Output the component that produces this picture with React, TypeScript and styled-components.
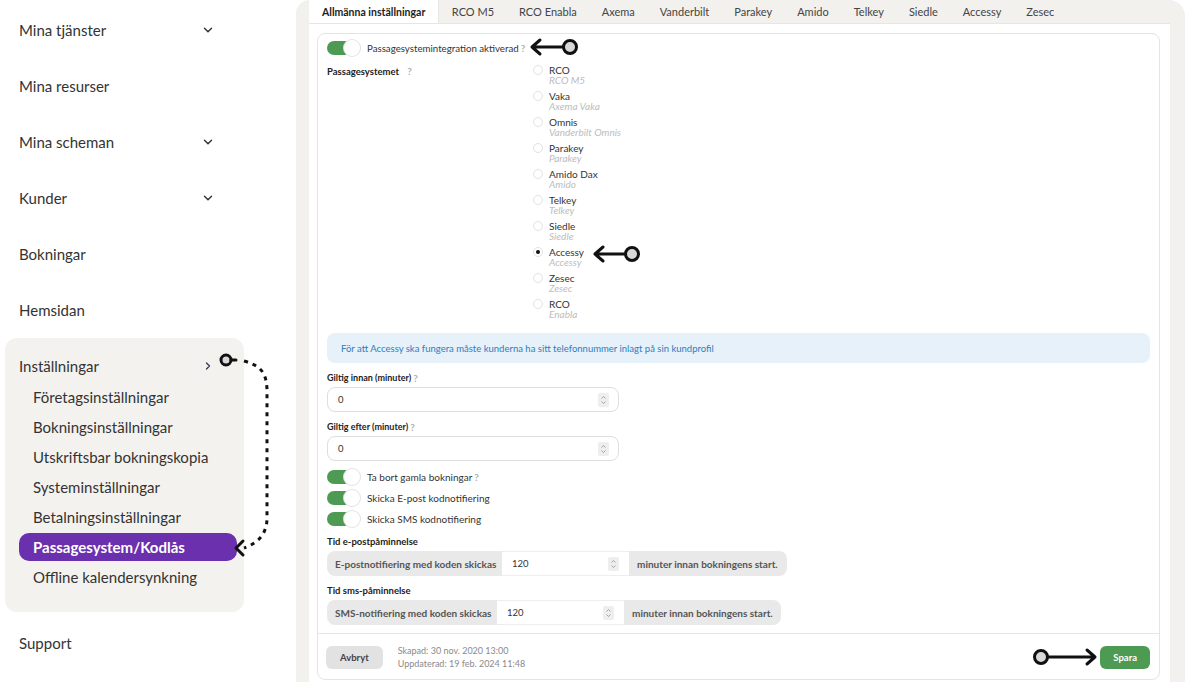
import React from "react";
import styled, { createGlobalStyle } from "styled-components";
import { ChevronDown, ChevronRight } from "lucide-react";

const UBUNTU = `"Lato", "Noto Sans", sans-serif`;
const NARROW = `"Lato", "Liberation Sans", sans-serif`;
const GREEN = "#4d9a52";

const GlobalStyle = createGlobalStyle`
  html, body {
    margin: 0;
    padding: 0;
    background: #ffffff;
    overflow: hidden;
  }
  * {
    box-sizing: border-box;
  }
`;

const Page = styled.div`
  position: relative;
  display: flex;
  width: 1186px;
  height: 682px;
  font-family: ${UBUNTU};
  color: #333;
  overflow: hidden;
`;

/* ---------- sidebar ---------- */

const Sidebar = styled.nav`
  width: 245px;
  flex-shrink: 0;
  padding-top: 2px;
`;

const SideItem = styled.div`
  height: 56px;
  padding: 0 30px 0 19px;
  display: flex;
  align-items: center;
  justify-content: space-between;
  font-size: 15px;
  color: #333;
`;

const SettingsBox = styled.div`
  margin-left: 5px;
  width: 239px;
  background: #f3f2ef;
  border-radius: 12px;
  padding-bottom: 20px;
  margin-bottom: 3px;
`;

const SettingsHead = styled.div`
  display: flex;
  align-items: center;
  justify-content: space-between;
  height: 44px;
  padding: 18px 30px 6px 14px;
  font-size: 15px;
  line-height: 20px;
`;

const SubItem = styled.div<{ $active?: boolean }>`
  height: ${(p) => (p.$active ? "28px" : "30px")};
  margin: ${(p) => (p.$active ? "1px 7px 1px 14px" : "0")};
  padding-left: ${(p) => (p.$active ? "14px" : "28px")};
  display: flex;
  align-items: center;
  font-size: 15px;
  border-radius: 10px;
  background: ${(p) => (p.$active ? "#6a30ad" : "transparent")};
  color: ${(p) => (p.$active ? "#ffffff" : "#333")};
  font-weight: ${(p) => (p.$active ? 700 : 400)};
`;

/* ---------- main panel ---------- */

const Main = styled.main`
  margin-left: 51px;
  width: 889px;
  height: 694px;
  background: #f2f1ee;
  border-radius: 14px 16px 0 14px;
  padding: 0 15px 0 13px;
  display: flex;
  flex-direction: column;
`;

const Tabs = styled.div`
  display: flex;
  height: 23px;
  flex-shrink: 0;
`;

const Tab = styled.div<{ $active?: boolean }>`
  display: flex;
  align-items: center;
  padding: 0 ${(p) => (p.$active ? "13px" : "12.5px")};
  font-size: ${(p) => (p.$active ? "10.5px" : "11px")};
  font-weight: ${(p) => (p.$active ? 700 : 400)};
  color: ${(p) => (p.$active ? "#222" : "#444")};
  background: ${(p) => (p.$active ? "#ffffff" : "transparent")};
  border-right: ${(p) => (p.$active ? "1px solid #e6e6e6" : "none")};
`;

const Content = styled.div`
  flex: 1;
  background: #ffffff;
  border-top: 1px solid #e6e6e6;
  padding: 9px 10px 16px 8px;
  display: flex;
`;

const Card = styled.section`
  flex: 1;
  border: 1px solid #e4e4e4;
  border-radius: 8px;
  display: flex;
  flex-direction: column;
`;

const CardBody = styled.div`
  padding: 7px 9px 8px 9px;
  display: flex;
  flex-direction: column;
`;

const ToggleRow = styled.div<{ $h?: number }>`
  display: flex;
  align-items: center;
  height: ${(p) => p.$h ?? 14}px;
  font-size: 10px;
  color: #333;
`;

const Switch = styled.span`
  position: relative;
  width: 32px;
  height: 14px;
  border-radius: 7px;
  background: ${GREEN};
  margin-right: 8px;
  flex-shrink: 0;

  &::after {
    content: "";
    position: absolute;
    right: -1px;
    top: -1px;
    width: 16px;
    height: 16px;
    border-radius: 50%;
    background: #fff;
    box-shadow: 0 0 0 1px #e2e2e2;
  }
`;

const Help = styled.span<{ $gap?: number }>`
  color: #b0b0b0;
  font-weight: 700;
  font-size: 10px;
  margin-left: ${(p) => p.$gap ?? 2}px;
`;

const SwitchText = styled.span`
  font-size: 9.7px;
`;

const SystemRow = styled.div`
  display: flex;
  margin-top: 10px;
`;

const FieldLabel = styled.div<{ $narrow?: boolean }>`
  font-family: ${(p) => (p.$narrow ? NARROW : UBUNTU)};
  font-size: ${(p) => (p.$narrow ? "9px" : "9.5px")};
  font-weight: 700;
  color: #222;
  line-height: 14px;
`;

const SystemLabel = styled(FieldLabel)`
  width: 206px;
  margin-top: -1px;
`;

const RadioList = styled.div`
  display: flex;
  flex-direction: column;
`;

const RadioItem = styled.div`
  display: grid;
  grid-template-columns: 16px auto;
  padding-bottom: 6px;
  line-height: 10px;
  font-size: 10px;
`;

const Radio = styled.span<{ $checked?: boolean }>`
  width: 10px;
  height: 10px;
  border-radius: 50%;
  border: 1px solid #e2e2e2;
  background: #fff;
  display: flex;
  align-items: center;
  justify-content: center;

  &::after {
    content: "";
    width: 4px;
    height: 4px;
    border-radius: 50%;
    background: ${(p) => (p.$checked ? "#111" : "transparent")};
  }
`;

const RadioName = styled.span`
  color: #333;
`;

const RadioSub = styled.span`
  grid-column: 2;
  color: #bdbdbd;
  font-style: italic;
`;

const InfoBox = styled.div`
  margin-top: 8px;
  height: 30px;
  border-radius: 8px;
  background: #e6f1fa;
  color: #2e7dc0;
  font-family: ${NARROW};
  font-size: 9.5px;
  display: flex;
  align-items: center;
  padding-left: 14px;
`;

const LabelRow = styled.div<{ $mt: number }>`
  display: flex;
  align-items: center;
  margin-top: ${(p) => p.$mt}px;
`;

const NumberInput = styled.div`
  margin-top: 2px;
  width: 292px;
  height: 25px;
  border: 1px solid #dedede;
  border-radius: 8px;
  display: flex;
  align-items: center;
  justify-content: space-between;
  padding: 0 9px 0 10px;
  font-family: ${NARROW};
  font-size: 9.5px;
  color: #333;
`;

const SpinBox = styled.span`
  width: 11px;
  height: 14px;
  background: #eeeeee;
  border-radius: 2px;
  display: flex;
  align-items: center;
  justify-content: center;
`;

const Group = styled.div<{ $w: number }>`
  margin-top: 2px;
  width: ${(p) => p.$w}px;
  height: 25px;
  border-radius: 8px;
  background: #e9e9e9;
  display: flex;
  overflow: hidden;
`;

const Addon = styled.div<{ $w?: number }>`
  display: flex;
  align-items: center;
  flex-shrink: 0;
  width: ${(p) => (p.$w ? `${p.$w}px` : "auto")};
  padding: 0 7px 0 8px;
  font-size: 10px;
  font-weight: 700;
  color: #555;
  white-space: nowrap;
`;

const GroupInput = styled.div`
  width: 127px;
  flex-shrink: 0;
  background: #fff;
  border-top: 1px solid #eeeeee;
  border-bottom: 1px solid #eeeeee;
  display: flex;
  align-items: center;
  justify-content: space-between;
  padding: 0 10px 0 10px;
  font-size: 9.5px;
  color: #333;
`;

const Footer = styled.footer`
  border-top: 1px solid #e6e6e6;
  padding: 10px 9px 9px 8px;
  display: flex;
  align-items: center;
`;

const Button = styled.button<{ $primary?: boolean }>`
  height: 23px;
  padding: 0 ${(p) => (p.$primary ? "13px" : "14px")};
  border: none;
  border-radius: 6px;
  background: ${(p) => (p.$primary ? GREEN : "#e2e2e2")};
  color: ${(p) => (p.$primary ? "#fff" : "#444")};
  font-family: ${NARROW};
  font-size: 9.5px;
  font-weight: 700;
`;

const Stamps = styled.div`
  margin-left: 15px;
  display: flex;
  flex-direction: column;
  font-family: ${NARROW};
  font-size: 9px;
  line-height: 13px;
  color: #8a8a8a;
  flex: 1;
`;

const Overlay = styled.svg`
  position: absolute;
  left: 0;
  top: 0;
  pointer-events: none;
`;

/* ---------- data ---------- */

const tabs = [
  "Allmänna inställningar",
  "RCO M5",
  "RCO Enabla",
  "Axema",
  "Vanderbilt",
  "Parakey",
  "Amido",
  "Telkey",
  "Siedle",
  "Accessy",
  "Zesec",
];

const systems = [
  ["RCO", "RCO M5"],
  ["Vaka", "Axema Vaka"],
  ["Omnis", "Vanderbilt Omnis"],
  ["Parakey", "Parakey"],
  ["Amido Dax", "Amido"],
  ["Telkey", "Telkey"],
  ["Siedle", "Siedle"],
  ["Accessy", "Accessy"],
  ["Zesec", "Zesec"],
  ["RCO", "Enabla"],
];

const settings = [
  "Företagsinställningar",
  "Bokningsinställningar",
  "Utskriftsbar bokningskopia",
  "Systeminställningar",
  "Betalningsinställningar",
  "Passagesystem/Kodlås",
  "Offline kalendersynkning",
];

const Spinner = () => (
  <SpinBox>
    <svg width="7" height="10" viewBox="0 0 7 10" fill="none" stroke="#9a9a9a" strokeWidth="0.9">
      <path d="M1.5 3.5 L3.5 1.5 L5.5 3.5" />
      <path d="M1.5 6.5 L3.5 8.5 L5.5 6.5" />
    </svg>
  </SpinBox>
);

const Annotations = () => (
  <Overlay width="1186" height="682" viewBox="0 0 1186 682">
    <g fill="none" stroke="#111" strokeWidth="3" strokeLinecap="round" strokeLinejoin="round">
      {/* toggle arrow */}
      <path d="M532 47 H563 M540 40 L532 47 L540 54" />
      <circle cx="570" cy="47" r="6.5" fill="#d9d9d9" />
      {/* accessy arrow */}
      <path d="M595 254 H625 M603 247 L595 254 L603 261" />
      <circle cx="632" cy="254" r="6.5" fill="#d9d9d9" />
      {/* save arrow */}
      <path d="M1048 657 H1095 M1087 650 L1095 657 L1087 664" />
      <circle cx="1041" cy="657" r="6.5" fill="#d9d9d9" />
      {/* settings loop */}
      <circle cx="226" cy="360" r="5" fill="#d9d9d9" />
      <path d="M231 360 H236" />
      <path
        d="M244 361 C262 366 267 374 267 392 V518 C267 534 258 543 244 548"
        strokeDasharray="4 5"
        strokeLinecap="butt"
      />
      <path d="M243 541 L236 548 L243 555" />
    </g>
  </Overlay>
);

export default function App() {
  return (
    <>
      <GlobalStyle />
      <Page>
        <Sidebar>
          <SideItem>
            Mina tjänster <ChevronDown size={14} strokeWidth={2.5} />
          </SideItem>
          <SideItem>Mina resurser</SideItem>
          <SideItem>
            Mina scheman <ChevronDown size={14} strokeWidth={2.5} />
          </SideItem>
          <SideItem>
            Kunder <ChevronDown size={14} strokeWidth={2.5} />
          </SideItem>
          <SideItem>Bokningar</SideItem>
          <SideItem>Hemsidan</SideItem>
          <SettingsBox>
            <SettingsHead>
              Inställningar <ChevronRight size={12} strokeWidth={2.5} color="#2b3a55" />
            </SettingsHead>
            {settings.map((s) => (
              <SubItem key={s} $active={s === "Passagesystem/Kodlås"}>
                {s}
              </SubItem>
            ))}
          </SettingsBox>
          <SideItem>Support</SideItem>
        </Sidebar>

        <Main>
          <Tabs>
            {tabs.map((t, i) => (
              <Tab key={t} $active={i === 0}>
                {t}
              </Tab>
            ))}
          </Tabs>
          <Content>
            <Card>
              <CardBody>
                <ToggleRow>
                  <Switch />
                  <SwitchText>Passagesystemintegration aktiverad</SwitchText>
                  <Help>?</Help>
                </ToggleRow>

                <SystemRow>
                  <SystemLabel>
                    Passagesystemet <Help $gap={6}>?</Help>
                  </SystemLabel>
                  <RadioList>
                    {systems.map(([name, sub], i) => (
                      <RadioItem key={i}>
                        <Radio $checked={name === "Accessy"} />
                        <RadioName>{name}</RadioName>
                        <RadioSub>{sub}</RadioSub>
                      </RadioItem>
                    ))}
                  </RadioList>
                </SystemRow>

                <InfoBox>
                  För att Accessy ska fungera måste kunderna ha sitt telefonnummer inlagt på sin kundprofil
                </InfoBox>

                <LabelRow $mt={8}>
                  <FieldLabel $narrow>Giltig innan (minuter)</FieldLabel>
                  <Help>?</Help>
                </LabelRow>
                <NumberInput>
                  0 <Spinner />
                </NumberInput>

                <LabelRow $mt={8}>
                  <FieldLabel $narrow>Giltig efter (minuter)</FieldLabel>
                  <Help>?</Help>
                </LabelRow>
                <NumberInput>
                  0 <Spinner />
                </NumberInput>

                <div style={{ marginTop: 5 }}>
                  <ToggleRow $h={21}>
                    <Switch />
                    Ta bort gamla bokningar
                    <Help>?</Help>
                  </ToggleRow>
                  <ToggleRow $h={21}>
                    <Switch />
                    Skicka E-post kodnotifiering
                  </ToggleRow>
                  <ToggleRow $h={21}>
                    <Switch />
                    Skicka SMS kodnotifiering
                  </ToggleRow>
                </div>

                <LabelRow $mt={6}>
                  <FieldLabel>Tid e-postpåminnelse</FieldLabel>
                </LabelRow>
                <Group $w={460}>
                  <Addon $w={175}>E-postnotifiering med koden skickas</Addon>
                  <GroupInput>
                    120 <Spinner />
                  </GroupInput>
                  <Addon>minuter innan bokningens start.</Addon>
                </Group>

                <LabelRow $mt={8}>
                  <FieldLabel>Tid sms-påminnelse</FieldLabel>
                </LabelRow>
                <Group $w={454}>
                  <Addon $w={170}>SMS-notifiering med koden skickas</Addon>
                  <GroupInput>
                    120 <Spinner />
                  </GroupInput>
                  <Addon>minuter innan bokningens start.</Addon>
                </Group>
              </CardBody>

              <Footer>
                <Button>Avbryt</Button>
                <Stamps>
                  <span>Skapad: 30 nov. 2020 13:00</span>
                  <span>Uppdaterad: 19 feb. 2024 11:48</span>
                </Stamps>
                <Button $primary>Spara</Button>
              </Footer>
            </Card>
          </Content>
        </Main>
        <Annotations />
      </Page>
    </>
  );
}
